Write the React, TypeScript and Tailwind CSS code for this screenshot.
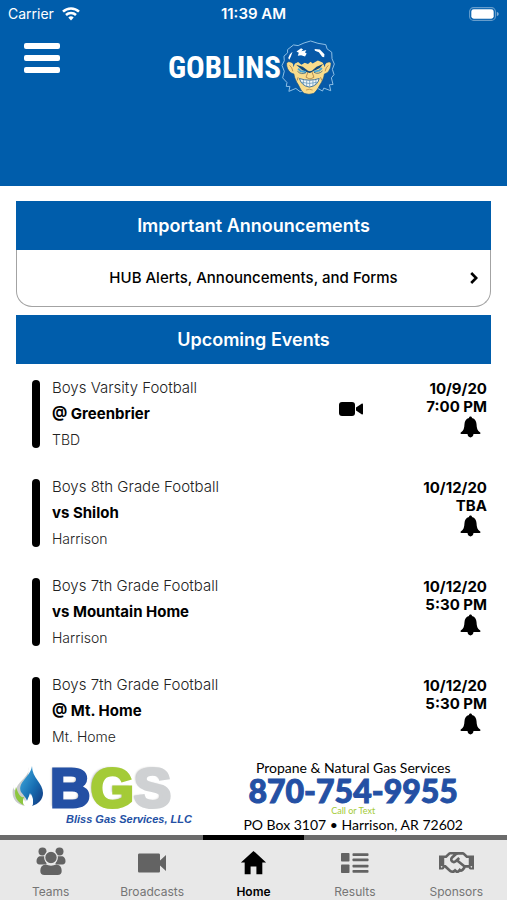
import React from "react";
import { FaRegHandshake } from "react-icons/fa";
import { IoMdHome } from "react-icons/io";
import clsx from "clsx";

type GameEvent = { team: string; title: string; place: string; date: string; time: string; video?: boolean };

const events: GameEvent[] = [
  { team: "Boys Varsity Football", title: "@ Greenbrier", place: "TBD", date: "10/9/20", time: "7:00 PM", video: true },
  { team: "Boys 8th Grade Football", title: "vs Shiloh", place: "Harrison", date: "10/12/20", time: "TBA" },
  { team: "Boys 7th Grade Football", title: "vs Mountain Home", place: "Harrison", date: "10/12/20", time: "5:30 PM" },
  { team: "Boys 7th Grade Football", title: "@ Mt. Home", place: "Mt. Home", date: "10/12/20", time: "5:30 PM" },
];

function WifiIcon() {
  return (
    <svg width="18" height="14" viewBox="0 0 18 14" fill="none" stroke="white" strokeWidth="2.5" aria-hidden="true">
      <path d="M1 4.700a11.400 11.400 0 0 1 16 0" />
      <path d="M4 8a7.200 7.200 0 0 1 10 0" />
      <path d="M6.300 10.600a3.900 3.900 0 0 1 5.400 0L9 13.400z" fill="white" stroke="none" />
    </svg>
  );
}

function BatteryIcon() {
  return (
    <svg width="30" height="14" viewBox="0 0 30 14" aria-hidden="true">
      <rect x="0.6" y="0.6" width="25.8" height="12.8" rx="4" fill="none" stroke="white" strokeOpacity="0.4" strokeWidth="1.1" />
      <rect x="2.3" y="2.3" width="22.4" height="9.4" rx="2.4" fill="white" />
      <path d="M27.8 4.8q2 .8 2 2.2t-2 2.2z" fill="white" fillOpacity="0.5" />
    </svg>
  );
}

function GoblinFace() {
  return (
    <svg width="54" height="55" viewBox="10 11 164 167" strokeLinejoin="round" aria-hidden="true">
      <path
        d="M68 168L55 158 34 167 37 152 26 152 28 140 15 126 20 106 13 88 20 74 19 60 30 50 30 40 48 26 62 28 80 20 100 14 122 21 146 25 150 38 164 48 165 68 172 84 166 100 171 116 163 126 168 146 157 147 161 165 140 157 136 166 122 158Z"
        fill="#0759a8"
        stroke="#8fc0e6"
        strokeWidth="3"
      />
      <path
        d="M48 84C40 76 30 74 27 82c-1 14 8 30 22 32 2 14 8 24 14 34 6 12 10 20 17 25q15 6 30 0c7-6 12-14 18-25 6-10 12-20 14-34 12-2 20-18 20-32-3-8-14-4-21 4l-6-12-18-6-14 8-10-4-16 8-14-6z"
        fill="#f9dc8c"
        stroke="#124f86"
        strokeWidth="2"
      />
      <path d="M48 94L44 68 58 48 95 40 130 48 148 68 143 94 138 80 122 73 106 82 100 77 92 84 82 80 72 86 62 78 52 82Z" fill="#0759a8" />
      <path d="M57 46l14-10 6 4-5 5 15-4-4 8 5 3-5 9-12-4-10 2 3-9zM112 38l16 2 14 14-1 9-6-1-10-14-12-4zM32 66l5-12 8-7-5 14-5 10z" fill="white" />
      <path d="M36 88q8 6 10 18M154 88q-8 6-10 18" fill="none" stroke="#b98e50" strokeWidth="3" />
      <path d="M56 86l20 6 16 12 6 2 6-2 14-12 20-8-10 12-20 10-10 5-8-1-16-8z" fill="#134a7d" />
      <path d="M62 98l8 8 16 2M134 96l-8 8-16 3" fill="none" stroke="#4ba8d8" strokeWidth="6" />
      <path d="M60 106q12 12 26 4M110 109q14 8 26-4" fill="none" stroke="#134a7d" strokeWidth="2" />
      <path d="M92 108l-6 16 8 4 4 1 4-1 8-4-6-16M62 124l-3 10M130 124l4 10" fill="none" stroke="#a87e45" strokeWidth="2.500" />
      <path d="M66 128q30 10 60 0-4 22-30 26-24-4-30-26z" fill="#f3f7f7" stroke="#245d91" strokeWidth="2.500" />
      <path d="M70 139q26 8 52 0M78 132v14M88 134v18M97 134v19M107 134v17M116 132v14" fill="none" stroke="#5f94bb" strokeWidth="2.200" />
      <path d="M86 163q10-5 20 0" fill="none" stroke="#b98e50" strokeWidth="2.500" />
    </svg>
  );
}

function BellIcon() {
  return (
    <svg width="21" height="22" viewBox="0 0 20 22" aria-hidden="true">
      <path d="M10 .500c.9 0 1.400.6 1.500 1.400 3 .8 4.300 3 4.500 6 .2 4.100.8 6.700 3.700 8.700.6.600.300 1.500-.6 1.500H13c-.3 2.100-1.400 3.300-3 3.300s-2.700-1.200-3-3.300H.900c-.9 0-1.200-.9-.6-1.500 2.900-2 3.500-4.600 3.700-8.700.2-3 1.500-5.200 4.500-6C8.600 1.100 9.100.5 10 .500z" />
    </svg>
  );
}

function CameraIcon() {
  return (
    <svg className="mt-[22px] self-start" width="24" height="14" viewBox="0 0 24 14" aria-label="Video available" role="img">
      <rect width="16" height="14" rx="3" />
      <path d="M17 5.500l5.600-3.800c.8-.5 1.400-.1 1.400.6v9.400c0 .7-.6 1.100-1.400.6L17 8.500z" />
    </svg>
  );
}

function TeamsIcon() {
  return (
    <svg className="mb-1" width="30" height="28" viewBox="0 0 30 28" fill="#636363" aria-hidden="true">
      <circle cx="6.500" cy="4.500" r="4" />
      <circle cx="23.500" cy="4.500" r="4" />
      <path d="M3.500 9.300h5.400v3.200c.3 1.600.9 2.700 2 3.900-1 .3-2 .7-2.800 1.100H3.600C1.400 17.500.5 16 .5 14.300c0-2.400 1-4.200 3-5zM26.500 9.300h-5.400v3.200c-.3 1.600-.9 2.700-2 3.900 1 .3 2 .7 2.800 1.100h4.500c2.200 0 3.100-1.500 3.100-3.200 0-2.400-1-4.200-3-5z" />
      <circle cx="15" cy="10.500" r="6.300" stroke="#e8e8e8" strokeWidth="1.200" />
      <path d="M9.500 17.300q5.500 2.700 11 0c3.700.9 5.200 3.200 5.200 6.600 0 2.600-1.500 4.100-4 4.100H8.300c-2.500 0-4-1.500-4-4.100 0-3.400 1.500-5.700 5.200-6.600z" />
    </svg>
  );
}

function BroadcastIcon() {
  return (
    <svg width="28" height="20" viewBox="0 0 28 20" fill="#636363" aria-hidden="true">
      <path d="M1.500.5h19c1 0 1.500.5 1.500 1.500v5.500L28 2v16l-6-5.500V18c0 1-.5 1.500-1.500 1.500h-19C.5 19.500 0 19 0 18V2C0 1 .5.5 1.500.5z" />
    </svg>
  );
}

function ResultsIcon() {
  return (
    <svg width="28" height="20" viewBox="0 0 28 20" fill="#636363" aria-hidden="true">
      <rect width="8.500" height="8.500" rx="0.800" />
      <rect y="11.500" width="8.500" height="8.500" rx="0.800" />
      <rect x="11.500" y="0.300" width="16" height="2.800" rx="0.800" />
      <rect x="11.500" y="5.500" width="16" height="2.800" rx="0.800" />
      <rect x="11.500" y="11.800" width="16" height="2.800" rx="0.800" />
      <rect x="11.500" y="17" width="16" height="2.800" rx="0.800" />
    </svg>
  );
}

function FlameIcon() {
  return (
    <svg className="mb-4" width="34" height="44" viewBox="0 0 34 44" aria-hidden="true">
      <defs>
        <linearGradient id="flame" x1="0" y1="0" x2="1" y2="1">
          <stop offset="0" stopColor="#48b2e2" />
          <stop offset="0.55" stopColor="#176fb3" />
          <stop offset="1" stopColor="#12357c" />
        </linearGradient>
      </defs>
      <path d="M17 1C18 11 4 16 4 25c-3-2-3-4-2-6-4 12 1 19 11 21z" fill="#c9cccd" />
      <path d="M20 0c0 12 11 17 11 27 0 6-4 11-11 13 2-5 1-8-1-12-1 4-2 5-4 7-1-4-4-6-6-9C5 16 18 12 20 0z" fill="url(#flame)" />
      <path d="M4 21c-3 9 1 16 10 19-3-4-3-6-2-9-4 1-6-4-8-10z" fill="#8dc63f" />
      <path d="M18 27c-1 4-3 6-3 9-2 0-3-2-3-4-2 4-1 7 2 9h5c4-3 1-9-1-14z" fill="white" />
    </svg>
  );
}

function SectionTitle({ children }: { children: React.ReactNode }) {
  return (
    <h2 className="flex h-[49px] items-center justify-center bg-[#005dab] text-lg font-semibold text-white">
      {children}
    </h2>
  );
}

function EventRow({ event }: { event: GameEvent }) {
  return (
    <li className="flex h-[68px] items-center">
      <span className="h-full w-2 rounded-full bg-black" />
      <div className="ml-3 flex-1 leading-[26px]">
        <p className="text-[15px] font-light text-[#222]">{event.team}</p>
        <p className="text-[15px] font-bold text-black">{event.title}</p>
        <p className="text-[14px] font-light text-[#222]">{event.place}</p>
      </div>
      {event.video && <CameraIcon />}
      <div className="flex w-[124px] flex-col items-end self-start text-[15px] leading-[18px] font-bold text-black">
        <span>{event.date}</span>
        <span>{event.time}</span>
        <button type="button" aria-label={`Notify me: ${event.title}`} className="mr-1.5">
          <BellIcon />
        </button>
      </div>
    </li>
  );
}

const tabs = [
  { label: "Teams", icon: <TeamsIcon /> },
  { label: "Broadcasts", icon: <BroadcastIcon /> },
  { label: "Home", icon: <IoMdHome size={31} color="black" />, active: true },
  { label: "Results", icon: <ResultsIcon /> },
  { label: "Sponsors", icon: <FaRegHandshake size={35} color="#636363" /> },
];

export default function App() {
  return (
    <div className="flex min-h-screen flex-col bg-white font-['Inter',sans-serif]">
      <header className="h-[186px] bg-[#005dab] text-white">
        <div className="grid h-7 grid-cols-3 items-center px-2 text-sm">
          <span className="flex items-center gap-2">
            Carrier <WifiIcon />
          </span>
          <span className="text-center text-[15px] font-semibold">11:39 AM</span>
          <span className="flex justify-end">
            <BatteryIcon />
          </span>
        </div>
        <div className="grid grid-cols-[1fr_auto_1fr] items-start pt-3">
          <button type="button" aria-label="Menu" className="mt-[3px] ml-6 flex w-9 flex-col gap-[6px]">
            <span className="h-[6px] rounded-xs bg-white" />
            <span className="h-[6px] rounded-xs bg-white" />
            <span className="h-[6px] rounded-xs bg-white" />
          </button>
          <div className="flex h-[55px] items-center pr-1">
            <span className="text-[31px] leading-none font-bold font-['Roboto_Condensed','Liberation_Sans_Narrow','Liberation_Sans',sans-serif]">
              GOBLINS
            </span>
            <GoblinFace />
          </div>
        </div>
      </header>

      <main className="flex-1 px-4 pt-[15px]">
        <section>
          <SectionTitle>Important Announcements</SectionTitle>
          <a
            href="#announcements"
            className="flex h-[57px] items-center rounded-b-2xl border border-t-0 border-[#a3a3a3] px-3 text-[15px] font-medium text-black"
          >
            <span className="flex-1 pl-2 text-center">HUB Alerts, Announcements, and Forms</span>
            <svg width="8" height="12" viewBox="0 0 8 12" fill="none" stroke="black" strokeWidth="2.600" aria-hidden="true">
              <path d="M1.200 1l5 5-5 5" />
            </svg>
          </a>
        </section>
        <section className="mt-2">
          <SectionTitle>Upcoming Events</SectionTitle>
          <ul className="mt-4 flex flex-col gap-[31px] px-4 pr-1">
            {events.map((event) => (
              <EventRow key={event.team + event.title} event={event} />
            ))}
          </ul>
        </section>
      </main>

      <a href="#sponsor" className="flex h-[78px] items-center justify-between pr-11 pl-3">
        <span className="flex items-center">
          <FlameIcon />
          <span className="flex flex-col pl-1 font-['Liberation_Sans',sans-serif] font-bold">
            <span className="text-[56px] leading-[46px] [text-shadow:-2px_-1px_2px_#bbbbbb]">
              <span className="text-[#2450a4] [-webkit-text-stroke:3px_#2450a4]">B</span>
              <span className="text-[#a4cb37] [-webkit-text-stroke:3px_#a4cb37]">G</span>
              <span className="text-[#cfd1d3] [-webkit-text-stroke:3px_#cfd1d3]">S</span>
            </span>
            <span className="pl-4 text-[11px] leading-4 text-[#2450a4] italic">Bliss Gas Services, LLC</span>
          </span>
        </span>
        <span className="flex flex-col items-center font-['Lato',sans-serif] text-sm leading-[18px] text-black">
          <span>Propane &amp; Natural Gas Services</span>
          <span className="text-[32px] leading-7 font-black text-[#2450a4] [-webkit-text-stroke:1px_#2450a4]">
            870-754-9955
          </span>
          <span className="text-[9px] leading-[11px] text-[#a4cb37]">Call or Text</span>
          <span>PO Box 3107 • Harrison, AR 72602</span>
        </span>
      </a>

      <nav className="grid grid-cols-5 bg-[#e8e8e8]">
        {tabs.map((tab) => (
          <a
            key={tab.label}
            href={`#${tab.label.toLowerCase()}`}
            aria-current={tab.active ? "page" : undefined}
            className={clsx(
              "flex h-[65px] flex-col items-center border-t-[5px] text-[12px] leading-4",
              tab.active ? "border-black font-semibold text-black" : "border-[#6b6b6b] text-[#757575]",
            )}
          >
            <span className="flex h-[45px] items-center pt-px">{tab.icon}</span>
            {tab.label}
          </a>
        ))}
      </nav>
    </div>
  );
}
